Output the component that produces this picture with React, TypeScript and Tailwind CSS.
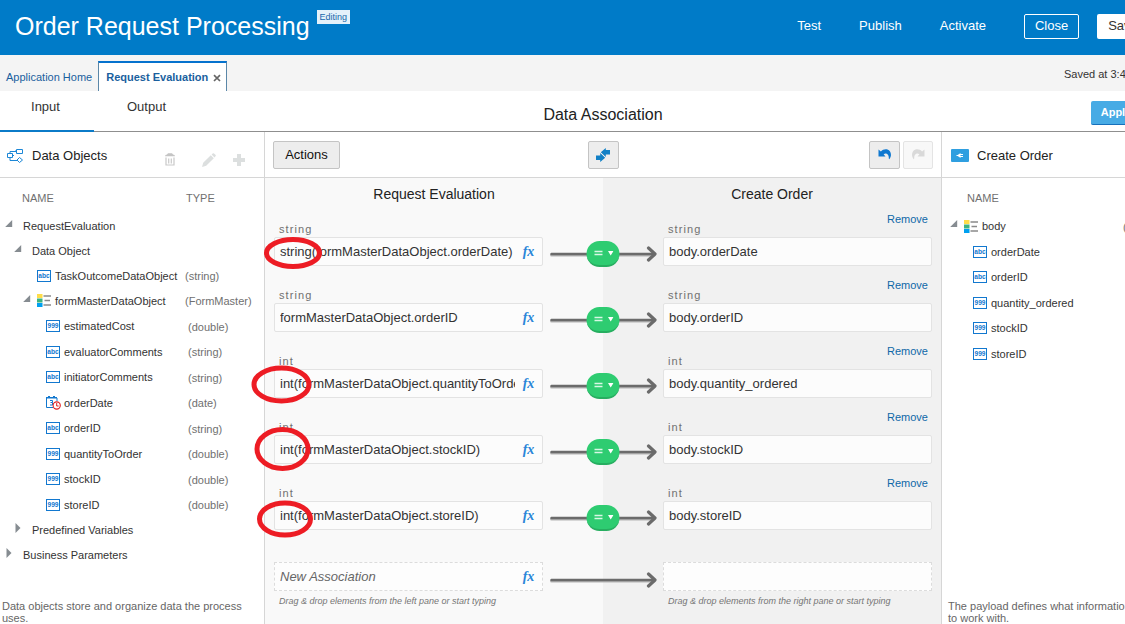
import React from 'react';

type Kind = 'text' | 'number' | 'date' | 'form';

function TypeIcon({ kind }: { kind: Kind }) {
  if (kind === 'form') {
    return (
      <svg width="14" height="13" viewBox="0 0 14 13" className="shrink-0" aria-hidden="true">
        <rect x="0" y="0" width="5.5" height="4" fill="#ffdd4a" />
        <rect x="0" y="4.5" width="5.5" height="4" fill="#3fb37f" />
        <rect x="0" y="9" width="5.5" height="4" fill="#00a0f0" />
        <path d="M6.5 2H14M7.5 6.5H13M6.5 11H14" stroke="#8a8a8a" strokeWidth="1.6" />
      </svg>
    );
  }
  if (kind === 'date') {
    return (
      <svg width="15" height="14" viewBox="0 0 15 14" className="-mr-px shrink-0" aria-hidden="true">
        <path d="M0.5 2V11.5H7M11 5V2" fill="none" stroke="#1278cf" />
        <path d="M0 1H2V0H4V1H7V0H9V1H11V2.6H0Z" fill="#1278cf" />
        <path d="M4 4.5H6.5V6.5H4.5M6.5 6.5V9H4" fill="none" stroke="#1278cf" />
        <circle cx="10.7" cy="9.5" r="3.6" fill="#fff" stroke="#e02020" strokeWidth="1.1" />
        <path d="M10.7 7V10H12.6" fill="none" stroke="#e02020" />
      </svg>
    );
  }
  return (
    <svg width="14" height="12" viewBox="0 0 14 12" className="shrink-0" aria-hidden="true">
      <rect x="0.5" y="0.5" width="13" height="11" fill="#fff" stroke="#1278cf" />
      <text
        x="7"
        y={kind === 'text' ? 8.4 : 8.3}
        textAnchor="middle"
        fontSize="6.6"
        fontWeight="bold"
        fill="#1278cf"
        fontFamily="Liberation Sans, sans-serif"
      >
        {kind === 'text' ? 'abc' : '999'}
      </text>
    </svg>
  );
}

function Twisty({ open }: { open: boolean }) {
  return (
    <svg width="8" height="10" viewBox="0 0 8 10" className="block" aria-hidden="true">
      <path d={open ? 'M7.2 1V8H0.2Z' : 'M1.5 0L6.5 5L1.5 10Z'} fill="#868c91" />
    </svg>
  );
}

type Node = {
  name: string;
  type?: string;
  kind?: Kind;
  open?: boolean;
  row: string;
  typePad?: string;
};

const leftTree: Node[] = [
  { name: 'RequestEvaluation', open: true, row: 'h-[25px] pl-[5px]' },
  { name: 'Data Object', open: true, row: 'h-[25px] pl-[14px]' },
  { name: 'TaskOutcomeDataObject', type: '(string)', kind: 'text', row: 'h-[25px] pl-[37px]' },
  { name: 'formMasterDataObject', type: '(FormMaster)', kind: 'form', open: true, row: 'h-[25px] pl-[23px]' },
  { name: 'estimatedCost', type: '(double)', kind: 'number', row: 'h-[26px] pl-[46px]', typePad: 'pl-[3px]' },
  { name: 'evaluatorComments', type: '(string)', kind: 'text', row: 'h-[25px] pl-[46px]', typePad: 'pl-[3px]' },
  { name: 'initiatorComments', type: '(string)', kind: 'text', row: 'h-[26px] pl-[46px]', typePad: 'pl-[3px]' },
  { name: 'orderDate', type: '(date)', kind: 'date', row: 'h-[25px] pl-[46px]', typePad: 'pl-[3px]' },
  { name: 'orderID', type: '(string)', kind: 'text', row: 'h-[26px] pl-[46px]', typePad: 'pl-[3px]' },
  { name: 'quantityToOrder', type: '(double)', kind: 'number', row: 'h-[25px] pl-[46px]', typePad: 'pl-[3px]' },
  { name: 'stockID', type: '(double)', kind: 'number', row: 'h-[26px] pl-[46px]', typePad: 'pl-[3px]' },
  { name: 'storeID', type: '(double)', kind: 'number', row: 'h-[25px] pl-[46px]', typePad: 'pl-[3px]' },
  { name: 'Predefined Variables', open: false, row: 'h-[25px] pl-[14px]' },
  { name: 'Business Parameters', open: false, row: 'h-[25px] pl-[5px]' },
];

const rightTree: Node[] = [
  { name: 'body', type: '(body)', kind: 'form', open: true, row: 'h-[26px] pl-[8px]' },
  { name: 'orderDate', kind: 'text', row: 'h-[25px] pl-[31px]' },
  { name: 'orderID', kind: 'text', row: 'h-[26px] pl-[31px]' },
  { name: 'quantity_ordered', kind: 'number', row: 'h-[25px] pl-[31px]' },
  { name: 'stockID', kind: 'number', row: 'h-[26px] pl-[31px]' },
  { name: 'storeID', kind: 'number', row: 'h-[25px] pl-[31px]' },
];

function Tree({ nodes, namePad, nameCol, typeHead }: { nodes: Node[]; namePad: string; nameCol: string; typeHead: string }) {
  return (
    <table className="w-full table-fixed text-[11px] leading-[14px] text-[#333]">
      <thead>
        <tr className="h-[35px] text-left text-[#707070]">
          <th className={`p-0 pt-1 font-normal ${namePad} ${nameCol}`}>NAME</th>
          <th className={`p-0 pt-1 font-normal ${typeHead}`}>TYPE</th>
        </tr>
      </thead>
      <tbody>
        {nodes.map((n) => (
          <tr key={n.name}>
            <td className="p-0">
              <div className={`flex items-center whitespace-nowrap ${n.row}`}>
                {n.open !== undefined && (
                  <button aria-label={`Toggle ${n.name}`} className={n.kind ? 'mr-[6px] pb-1' : 'mr-[10px] pb-1'}>
                    <Twisty open={n.open} />
                  </button>
                )}
                {n.kind && <TypeIcon kind={n.kind} />}
                <span className={n.kind ? 'ml-1' : ''}>{n.name}</span>
              </div>
            </td>
            <td className={`p-0 pt-px text-[#707070] ${n.typePad ?? ''}`}>{n.type}</td>
          </tr>
        ))}
      </tbody>
    </table>
  );
}

type Mapping = { type: string; from: string; to: string };

const mappings: Mapping[] = [
  { type: 'string', from: 'string(formMasterDataObject.orderDate)', to: 'body.orderDate' },
  { type: 'string', from: 'formMasterDataObject.orderID', to: 'body.orderID' },
  { type: 'int', from: 'int(formMasterDataObject.quantityToOrder)', to: 'body.quantity_ordered' },
  { type: 'int', from: 'int(formMasterDataObject.stockID)', to: 'body.stockID' },
  { type: 'int', from: 'int(formMasterDataObject.storeID)', to: 'body.storeID' },
];

function Arrow() {
  return (
    <svg width="107" height="18" viewBox="0 0 107 18" aria-hidden="true">
      <path d="M1.5 10H104" stroke="#b5b5b5" strokeWidth="3" strokeLinecap="round" />
      <path d="M1.5 9H104" stroke="#6b6b6b" strokeWidth="2.4" strokeLinecap="round" />
      <path d="M98.5 3L105 9L98.5 15" fill="none" stroke="#6b6b6b" strokeWidth="3.2" strokeLinecap="round" strokeLinejoin="round" />
    </svg>
  );
}

function FxButton() {
  return (
    <button
      aria-label="Edit expression"
      className="w-[27px] shrink-0 text-center font-['Liberation_Serif',serif] text-[14px] leading-4 font-bold text-[#2a86d8] italic"
    >
      fx
    </button>
  );
}

const fieldBox = 'flex h-[29px] items-center rounded-[2px] border border-[#e3e3e3] bg-[#fcfcfc]';
const newBox = 'flex h-[29px] items-center border border-dashed border-[#dcdcdc] bg-[#fdfdfd]';
const inputStyle = 'h-full min-w-0 flex-1 bg-transparent pl-[5px] text-[13px] text-[#333] outline-none';
const typeLabel = 'text-[11px] leading-[14px] tracking-widest text-[#707070]';

function MappingRow({ m, i }: { m: Mapping; i: number }) {
  return (
    <div className="grid grid-cols-[1fr_120px_1fr] pb-3">
      <div>
        <div className="flex h-[25px] items-end pb-px pl-[5px]">
          <label htmlFor={`from-${i}`} className={typeLabel}>{m.type}</label>
        </div>
        <div className={fieldBox}>
          <input id={`from-${i}`} defaultValue={m.from} className={inputStyle} />
          <FxButton />
        </div>
      </div>
      <div className="relative flex items-end justify-center pb-[3px]">
        <Arrow />
        <button
          aria-label="Mapping operator"
          className="absolute bottom-0 left-1/2 flex h-[26px] w-[33px] -translate-x-1/2 translate-y-px items-center justify-center rounded-[13px] border-b-2 border-[#27ae60] bg-[#2ecc71]"
        >
          <svg width="20" height="8" viewBox="0 0 20 8" aria-hidden="true">
            <path d="M1 2.5H9M1 5.5H9" stroke="#d8f7e5" strokeWidth="1.6" />
            <path d="M14.5 2H20L17.2 6.5Z" fill="#fff" />
          </svg>
        </button>
      </div>
      <div>
        <div className="flex h-[25px] items-end justify-between pb-px pl-[5px]">
          <label htmlFor={`to-${i}`} className={typeLabel}>{m.type}</label>
          <a href="#remove" className="self-start pr-1 text-[11px] leading-[14px] text-[#0f68a8]">Remove</a>
        </div>
        <div className={fieldBox}>
          <input id={`to-${i}`} defaultValue={m.to} className={inputStyle} />
        </div>
      </div>
    </div>
  );
}

const toolButton = 'flex h-7 items-center justify-center rounded-[2px] border border-[#c4c4c4] bg-[#ededed]';

function TurnIcon({ color, flip }: { color: string; flip?: boolean }) {
  return (
    <svg width="14" height="13" viewBox="0 0 14 13" aria-hidden="true">
      <g transform={flip ? 'translate(14 0) scale(-1 1)' : undefined} fill={color}>
        <path d="M0.5 1.5V8.5H7.5L5.6 6.2C8.2 4.4 11.2 6 10.8 10.8L11.2 11.2C14.2 8 13.2 2.8 9.5 1.6C7 0.9 4.5 1.8 2.9 3.6Z" />
      </g>
    </svg>
  );
}

export default function App() {
  return (
    <div className="h-screen overflow-hidden bg-white font-['Liberation_Sans',Arial,sans-serif] text-[#333]">
      <div className="relative flex h-full w-full min-w-[1206px] flex-col">
        <header className="flex h-[55px] shrink-0 items-center bg-[#007bc8] pr-[57px] pb-[3px] pl-[15px] text-white">
          <h1 className="text-[25px] leading-[30px]">Order Request Processing</h1>
          <span className="mt-[10px] ml-[7px] self-start bg-[#e4f1fa] px-[3px] text-[9px] leading-[14px] text-[#1768ab]">Editing</span>
          <nav className="ml-auto flex items-center gap-[38px] text-[13px]">
            <a href="#test">Test</a>
            <a href="#publish">Publish</a>
            <a href="#activate">Activate</a>
            <div className="flex gap-[18px]">
              <button className="h-[25px] w-[55px] rounded-[2px] border border-white">Close</button>
              <button className="h-[25px] w-[52px] rounded-[2px] bg-white text-[#333]">Save</button>
            </div>
          </nav>
        </header>

        <div className="flex h-9 shrink-0 items-end bg-[#f4f4f4] text-[11px] text-[#1a5f9e]">
          <a href="#home" className="pr-[6px] pb-[6px] pl-[6px] leading-4">Application Home</a>
          <div className="flex h-[30px] items-center border-x border-t-2 border-x-[#5b87a8] border-t-[#0572ce] bg-white pr-[5px] pl-[7px]">
            <a href="#evaluation" className="font-bold">Request Evaluation</a>
            <button aria-label="Close tab" className="mt-[2px] ml-[5px]">
              <svg width="8" height="8" viewBox="0 0 8 8" aria-hidden="true">
                <path d="M1 1.2L7 7M7 1.2L1 7" stroke="#666" strokeWidth="1.7" />
              </svg>
            </button>
          </div>
          <span className="ml-auto w-[142px] pb-[9px] leading-4 text-[#333]">Saved at 3:42 PM</span>
        </div>

        <div className="grid h-[41px] shrink-0 grid-cols-[1fr_auto_1fr] border-b border-[#8f8f8f]">
          <div className="flex items-start text-[13px]">
            <button className="-mb-px h-[41px] w-[94px] border-b-2 border-[#0b7bc8] pr-[3px] pb-2">Input</button>
            <button className="ml-[33px] h-8">Output</button>
          </div>
          <h2 className="pt-3 text-[16px] leading-6 text-[#222]">Data Association</h2>
          <div className="flex justify-end pt-[10px] pr-[65px]">
            <button className="h-6 w-[50px] rounded-[2px] border-b border-[#1670bb] bg-[#47abe5] text-[11px] font-bold text-white">Apply</button>
          </div>
        </div>

        <main className="flex min-h-0 flex-1">
          <aside className="flex w-[265px] shrink-0 flex-col border-r border-[#d6d6d6]">
            <div className="flex h-[46px] shrink-0 items-center border-b border-[#d6d6d6] pt-[2px] pl-[7px]">
              <svg width="16" height="16" viewBox="0 0 16 16" fill="none" stroke="#1c87d6" aria-hidden="true">
                <path d="M9.5 1.5H15.5V5.5H9.5ZM0.5 5.5H5.5V9.5H0.5ZM3 5.5V3.5H9.5M3 9.5V12.5H10M12.5 9.5L15.5 12L12.5 14.5L10 12Z" />
                <path d="M8 3H9M7 12.5H9M5.5 7.5H7" />
              </svg>
              <h3 className="ml-[9px] text-[13px] text-[#222]">Data Objects</h3>
              <div className="mt-2 ml-auto flex items-center pr-[19px]">
                <button aria-label="Delete" className="mr-[27px]">
                  <svg width="10" height="13" viewBox="0 0 10 13" aria-hidden="true">
                    <path d="M0 3.2Q0 1.5 2 1.5L3 0.3H7L8 1.5Q10 1.5 10 3.2Z" fill="#c4c4c4" />
                    <path d="M1 4.5V12H9V4.5M3.7 5.5V10.5M6.3 5.5V10.5" fill="none" stroke="#c9c9c9" strokeWidth="1.2" />
                  </svg>
                </button>
                <button aria-label="Edit" className="mr-[17px]">
                  <svg width="14" height="14" viewBox="0 0 14 14" aria-hidden="true">
                    <path d="M0 14L1.2 9.8L8.8 2.2L11.8 5.2L4.2 12.8ZM9.6 1.5L11 0.2Q11.5 0 12 0.4L13.7 2Q14 2.6 13.7 3L12.5 4.4Z" fill="#dcdfdf" />
                  </svg>
                </button>
                <button aria-label="Add">
                  <svg width="12" height="12" viewBox="0 0 12 12" aria-hidden="true">
                    <path d="M4 0H8V4H12V8H8V12H4V8H0V4H4Z" fill="#dcdfdf" />
                  </svg>
                </button>
              </div>
            </div>
            <Tree nodes={leftTree} namePad="pl-[22px]" nameCol="w-[185px]" typeHead="pl-px" />
            <p className="mt-auto pl-[2px] text-[11px] leading-3 font-extralight whitespace-nowrap text-[#666]">
              Data objects store and organize data the process<br />uses.
            </p>
          </aside>

          <section className="flex min-w-0 flex-1 flex-col">
            <div className="grid h-[46px] shrink-0 grid-cols-[1fr_auto_1fr] items-center border-b border-[#d6d6d6] px-2 text-[13px] text-[#111]">
              <div>
                <button className={`${toolButton} w-[67px]`}>Actions</button>
              </div>
              <button aria-label="Auto map" className={`${toolButton} w-[31px]`}>
                <svg width="14" height="14" viewBox="0 0 14 14" aria-hidden="true">
                  <path d="M4.8 4.2L9.8 0V2H14V6.4H9.8V9Z" fill="#1180c6" />
                  <path d="M9.2 9.8L4.2 14V12H0V7.6H4.2V5Z" fill="#1180c6" />
                  <path d="M4.4 4.4L9.6 9.6" stroke="#ededed" strokeWidth="0.8" />
                </svg>
              </button>
              <div className="flex justify-end gap-[3px]">
                <button aria-label="Undo" className={`${toolButton} w-[31px]`}>
                  <TurnIcon color="#0f78d0" />
                </button>
                <button aria-label="Redo" disabled className="flex h-7 w-[30px] items-center justify-center rounded-[2px] border border-[#e4e4e4] bg-[#f8f8f8]">
                  <TurnIcon color="#d9d9d9" flip />
                </button>
              </div>
            </div>
            <div className="flex-1 bg-[linear-gradient(to_right,#f9f9f9_50%,#f1f1f1_50%)]">
              <div className="grid h-[34px] grid-cols-2 text-center text-[14px] leading-8 text-[#222]">
                <h3>Request Evaluation</h3>
                <h3>Create Order</h3>
              </div>
              <div className="px-[9px]">
                {mappings.map((m, i) => (
                  <MappingRow key={m.to} m={m} i={i} />
                ))}
                <div className="grid grid-cols-[1fr_120px_1fr] pt-5">
                  <div>
                    <div className={newBox}>
                      <input aria-label="New association source" placeholder="New Association" className={`${inputStyle} italic placeholder:text-[#666]`} />
                      <FxButton />
                    </div>
                    <p className="pt-[3px] pl-[5px] text-[9px] leading-[14px] text-[#757575] italic">Drag &amp; drop elements from the left pane or start typing</p>
                  </div>
                  <div className="flex items-start justify-center pt-[9px]">
                    <Arrow />
                  </div>
                  <div>
                    <div className={newBox}>
                      <input aria-label="New association target" className={inputStyle} />
                    </div>
                    <p className="pt-[3px] pl-[5px] text-[9px] leading-[14px] text-[#757575] italic">Drag &amp; drop elements from the right pane or start typing</p>
                  </div>
                </div>
              </div>
            </div>
          </section>

          <aside className="flex w-[265px] shrink-0 flex-col border-l border-[#d6d6d6]">
            <div className="flex h-[46px] shrink-0 items-center border-b border-[#d6d6d6] pt-[2px] pl-[9px]">
              <svg width="18" height="13" viewBox="0 0 18 13" aria-hidden="true">
                <rect width="18" height="13" rx="1" fill="#2f9fe0" />
                <path d="M6 6.5L9.5 4V9ZM9 5H12V6H9ZM9 7H12V8H9ZM5.5 6H8V7H5.5Z" fill="#fff" />
              </svg>
              <h3 className="ml-2 text-[13px] text-[#222]">Create Order</h3>
            </div>
            <Tree nodes={rightTree} namePad="pl-[25px]" nameCol="w-[181px]" typeHead="pl-[6px]" />
            <p className="mt-auto pl-[6px] text-[11px] leading-3 font-extralight whitespace-nowrap text-[#666]">
              The payload defines what information you have<br />to work with.
            </p>
          </aside>
        </main>

        <svg className="pointer-events-none absolute top-0 left-0" width="340" height="560" viewBox="0 0 340 560" fill="none" stroke="#ed1c24" strokeWidth="5" aria-hidden="true">
          <ellipse cx="293" cy="253" rx="26.5" ry="13.5" />
          <ellipse cx="281.5" cy="384.5" rx="27.5" ry="16.5" />
          <ellipse cx="282.5" cy="449" rx="25.5" ry="19.5" />
          <ellipse cx="285" cy="519" rx="25.5" ry="16" />
        </svg>
      </div>
    </div>
  );
}
